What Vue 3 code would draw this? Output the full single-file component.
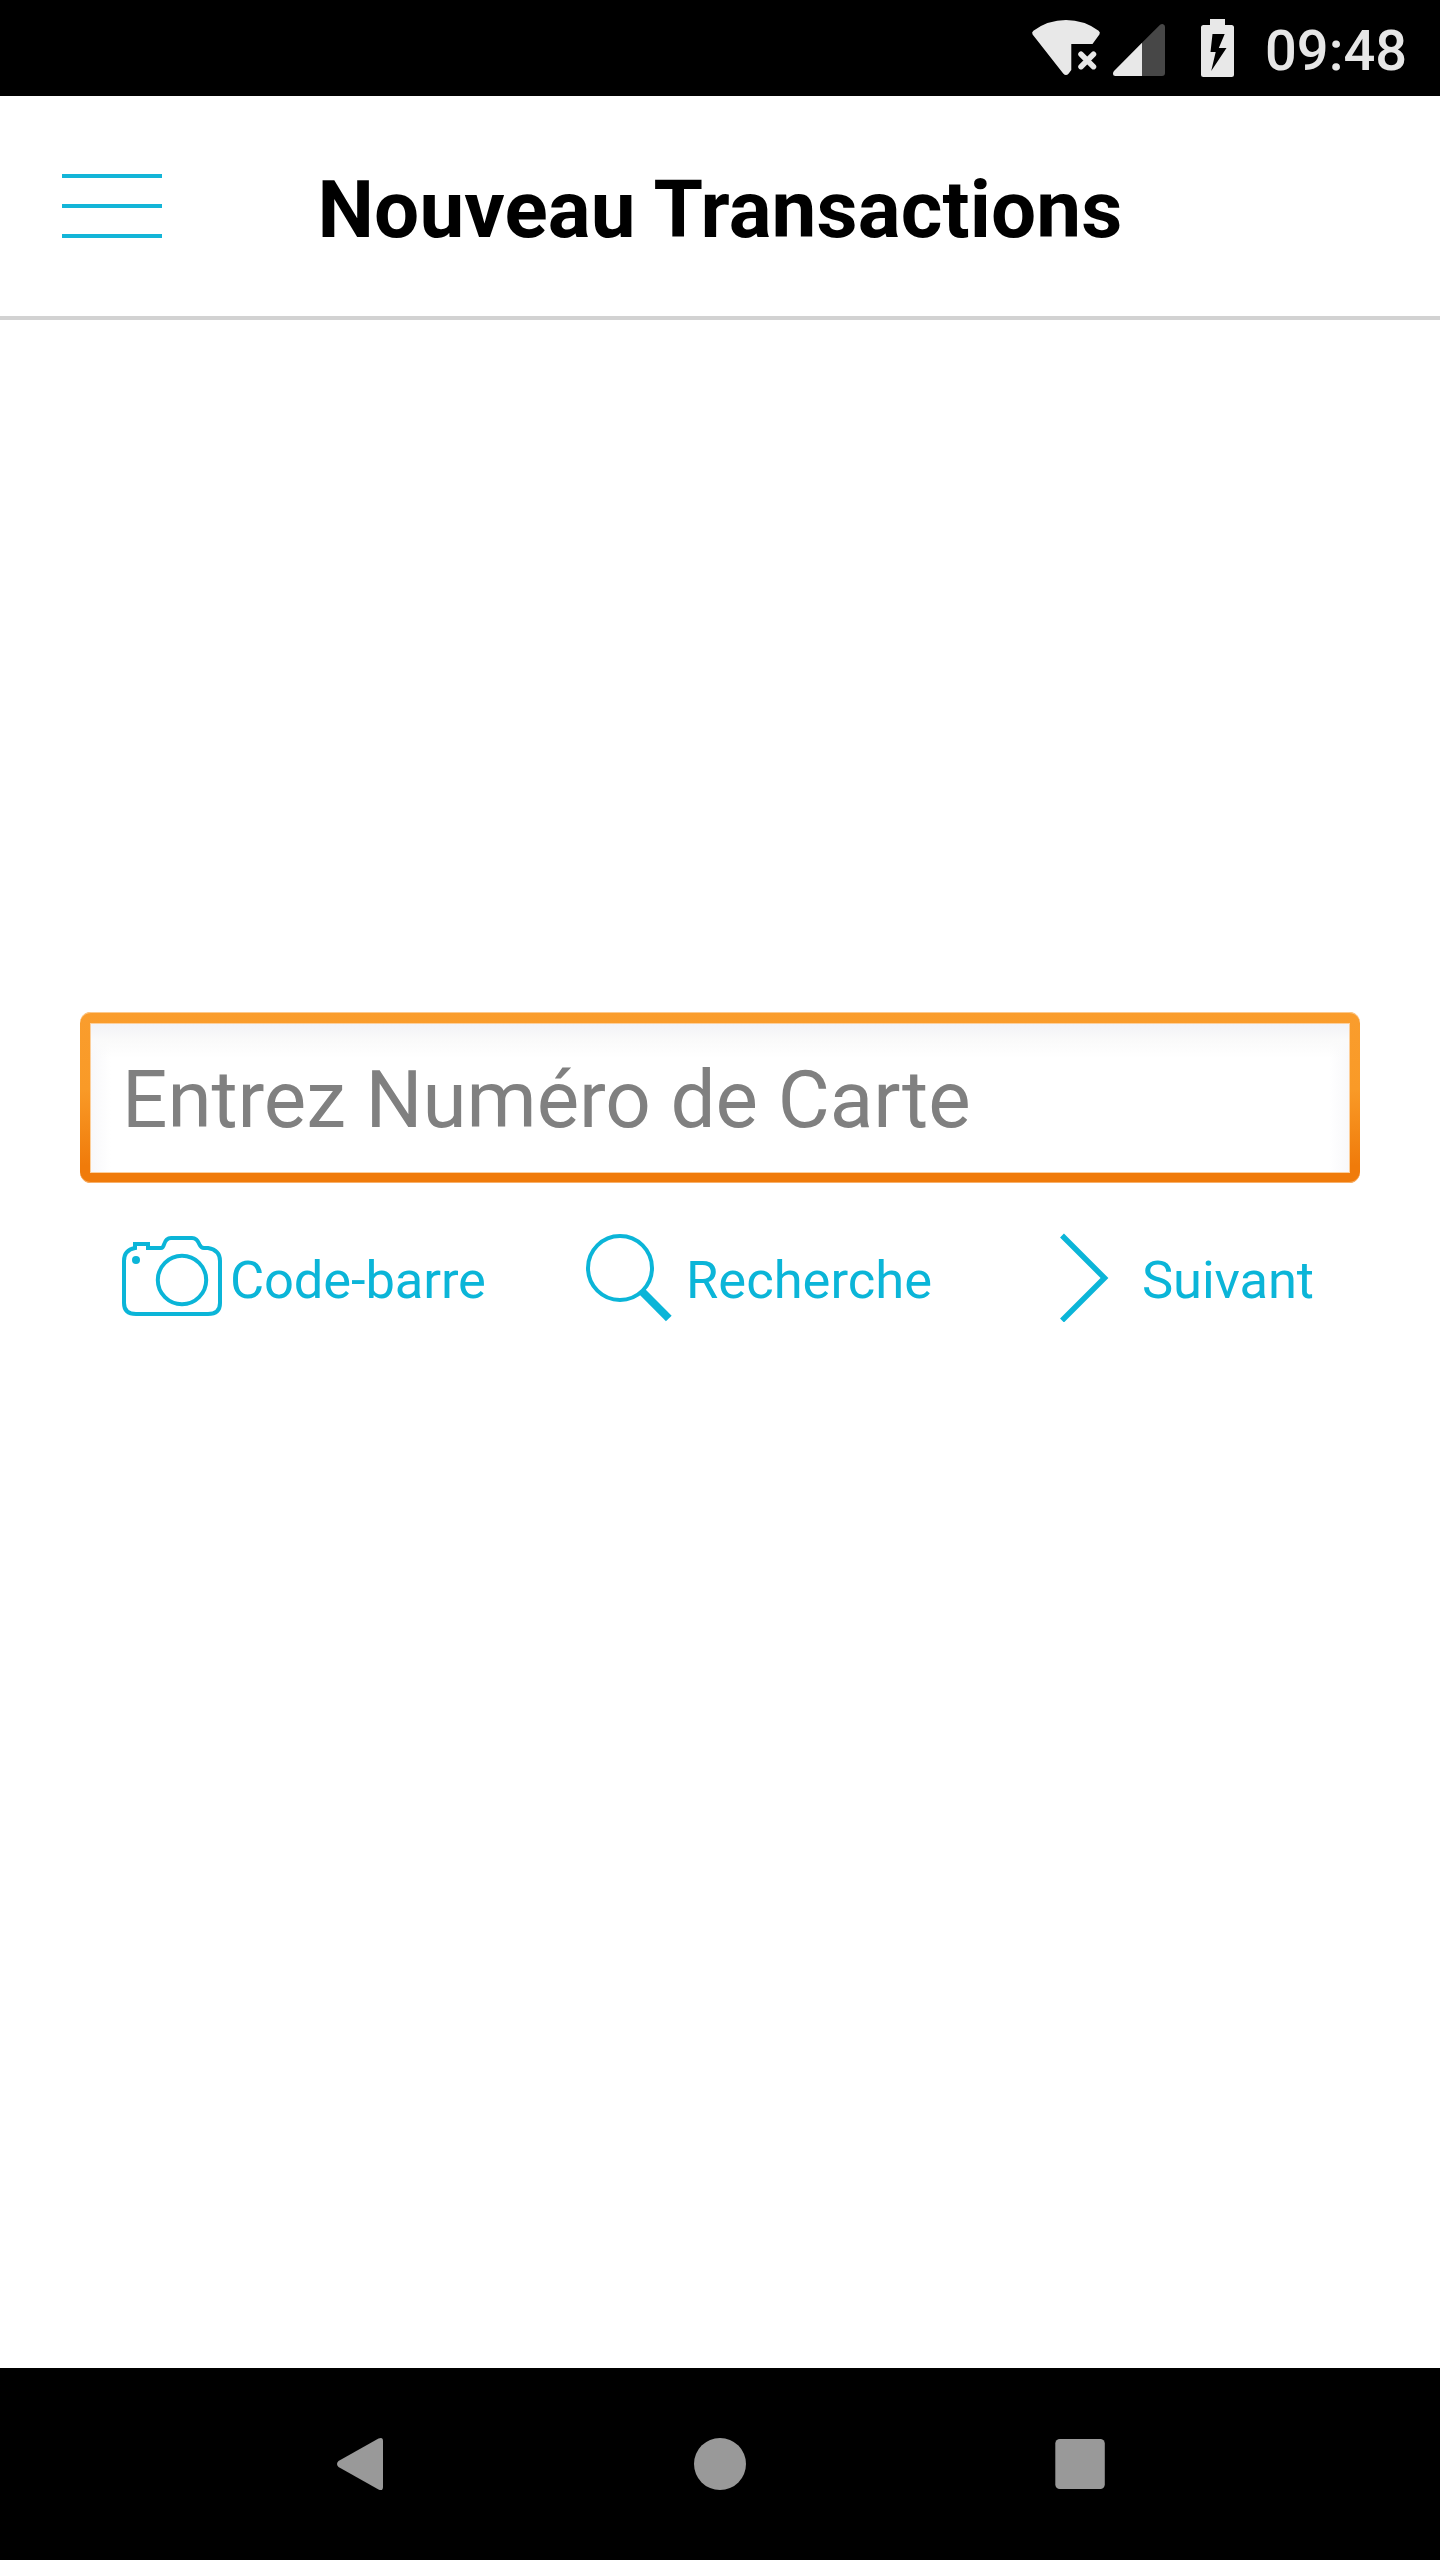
<script setup>
const title = 'Nouveau Transactions'
const placeholder = 'Entrez Numéro de Carte'
</script>

<template>
  <div class="screen">
    <div class="status">
      <svg class="wifi" width="72" height="60" viewBox="1030 18 72 60">
        <path class="lit" d="M1032.600 34.500Q1031.300 32.300 1033.400 30.700Q1048 20 1066 20Q1084 20 1098.600 30.700Q1100.700 32.300 1099.400 34.500L1092.500 44H1071.300V70L1068.700 73.500Q1066 76.500 1063.200 73.500Z" />
        <path class="cross" d="M1081 54.200L1093.500 66.700M1093.500 54.200L1081 66.700" />
      </svg>
      <svg class="signal" width="52" height="52" viewBox="1113 24 52 52">
        <path fill="#474747" d="M1142 42.800L1159.800 25Q1161.500 23.600 1163.200 24.200Q1165 25 1165 27V73Q1165 76 1162 76H1142Z" />
        <path class="lit" d="M1142 42.800V76H1115.500Q1113 76 1113 73.500Q1113 72 1114 71Z" />
      </svg>
      <svg class="battery" width="33" height="58" viewBox="1201 19 33 58">
        <path class="lit" d="M1210 19H1225V25H1231.500Q1234 25 1234 27.500V74.500Q1234 77 1231.500 77H1203.500Q1201 77 1201 74.500V27.500Q1201 25 1203.500 25H1210Z" />
        <path fill="#000" d="M1212.500 34H1224.700L1218.800 48H1226.500L1211.200 71L1215.700 52H1210.500Z" />
      </svg>
      <span class="clock">09:48</span>
    </div>

    <header class="header">
      <div class="menu"><i></i><i></i><i></i></div>
      <h1>{{ title }}</h1>
    </header>

    <main class="content">
      <div class="field">
        <div class="field-inner">{{ placeholder }}</div>
      </div>
      <div class="actions">
        <div class="action code">
          <svg width="100" height="90" viewBox="122 1232 100 90">
            <path class="line" d="M135 1248V1244H148V1248H161Q163 1248 164 1244.500Q166 1238 171 1238H192Q197 1238 199.500 1244.500Q201 1248 204 1248H208Q220 1250 220 1261V1303Q220 1314 208 1314H136Q124 1314 124 1303V1261Q124 1250 135 1248Z" />
            <circle class="line" cx="182" cy="1280" r="24.200" />
            <circle class="dot" cx="136" cy="1260" r="4" />
          </svg>
          <span>Code-barre</span>
        </div>
        <div class="action search">
          <svg width="90" height="90" viewBox="584 1232 90 90">
            <circle class="line" cx="620" cy="1268" r="32" />
            <path class="handle" d="M642 1291.500L668.800 1318.500" />
          </svg>
          <span>Recherche</span>
        </div>
        <div class="action next">
          <svg width="54" height="90" viewBox="1056 1232 54 90">
            <path class="chevron" d="M1062 1235.500L1104.500 1278L1062 1320.500" />
          </svg>
          <span>Suivant</span>
        </div>
      </div>
    </main>

    <nav class="nav">
      <svg width="770" height="54" viewBox="336 2437 770 54">
        <path d="M338.500 2461L378.500 2438.500Q383 2436.500 383 2441V2487Q383 2491.500 378.500 2489.500L338.500 2467Q335.500 2464 338.500 2461Z" />
        <circle cx="720" cy="2464" r="26" />
        <rect x="1055.300" y="2439" width="49.500" height="50" rx="4.500" />
      </svg>
    </nav>
  </div>
</template>

<style>
body { margin: 0; }
</style>

<style scoped>
.screen {
  width: 1440px;
  height: 2560px;
  display: flex;
  flex-direction: column;
  background: #fff;
  font-family: Roboto, sans-serif;
  overflow: hidden;
}
svg { display: block; flex: none; }
.status {
  flex: none;
  height: 96px;
  box-sizing: border-box;
  padding-left: 1030px;
  display: flex;
  align-items: flex-start;
  background: #000;
}
.lit { fill: #e8e8e8; }
.cross { stroke: #e8e8e8; stroke-width: 5.5; stroke-linecap: round; }
.wifi { margin-top: 18px; }
.signal { margin: 24px 0 0 11px; }
.battery { margin: 19px 0 0 36px; }
.clock {
  margin: 18px 0 0 31px;
  font-size: 56px;
  line-height: 66px;
  font-weight: 500;
  color: #e6e6e6;
}
.header {
  flex: none;
  height: 224px;
  box-sizing: border-box;
  border-bottom: 4px solid #d2d2d2;
  display: grid;
  grid-template-columns: 162px 1fr 162px;
}
.menu {
  padding: 78px 0 0 62px;
  display: flex;
  flex-direction: column;
  gap: 26px;
}
.menu i { height: 4px; background: #13b5d8; }
h1 {
  margin: 67px 0 0;
  font-size: 80px;
  line-height: 94px;
  letter-spacing: 0.12px;
  font-weight: 700;
  text-align: center;
  white-space: nowrap;
  color: #000;
}
.content { flex: 1; padding: 692px 80px 0; }
.field {
  height: 171px;
  box-sizing: border-box;
  padding: 12px 11px 11px;
  border-radius: 11px;
  background: linear-gradient(#fa9d2d 0%, #f99a27 45%, #f07b0a 90%, #f07b0a 100%);
  box-shadow: inset 0 1px 0 #fcc98c, inset 0 -1px 0 #f7b06a;
}
.field-inner {
  height: 148px;
  box-sizing: border-box;
  padding: 29px 0 0 31px;
  background:
    linear-gradient(#f3f3f6, #fafafa 16px, rgba(255, 255, 255, 0) 34px),
    linear-gradient(90deg, #f8f8fa, #fff 20px, #fff calc(100% - 20px), #f8f8fa);
  box-shadow: 0 0 0 1px #fccf9c;
  font-size: 80px;
  line-height: 94px;
  letter-spacing: -0.08px;
  color: #808080;
  white-space: nowrap;
}
.actions { display: flex; margin-top: 41px; }
.action {
  display: flex;
  align-items: flex-start;
  font-size: 52.5px;
  line-height: 62px;
  color: #0bb5d8;
  white-space: nowrap;
}
.action svg { margin-top: 8px; }
.action span { margin-top: 25px; }
.code { width: 462px; margin-left: 42px; gap: 8px; letter-spacing: -0.12px; }
.search { width: 472px; gap: 12px; }
.next { gap: 32px; letter-spacing: -0.1px; }
.line { fill: none; stroke: #0bb5d8; stroke-width: 4; }
.dot { fill: #0bb5d8; }
.handle { stroke: #0bb5d8; stroke-width: 8; }
.chevron { fill: none; stroke: #0bb5d8; stroke-width: 5.5; }
.nav {
  flex: none;
  height: 192px;
  box-sizing: border-box;
  padding: 69px 0 0 336px;
  background: #000;
}
.nav svg { fill: #999; }
</style>
